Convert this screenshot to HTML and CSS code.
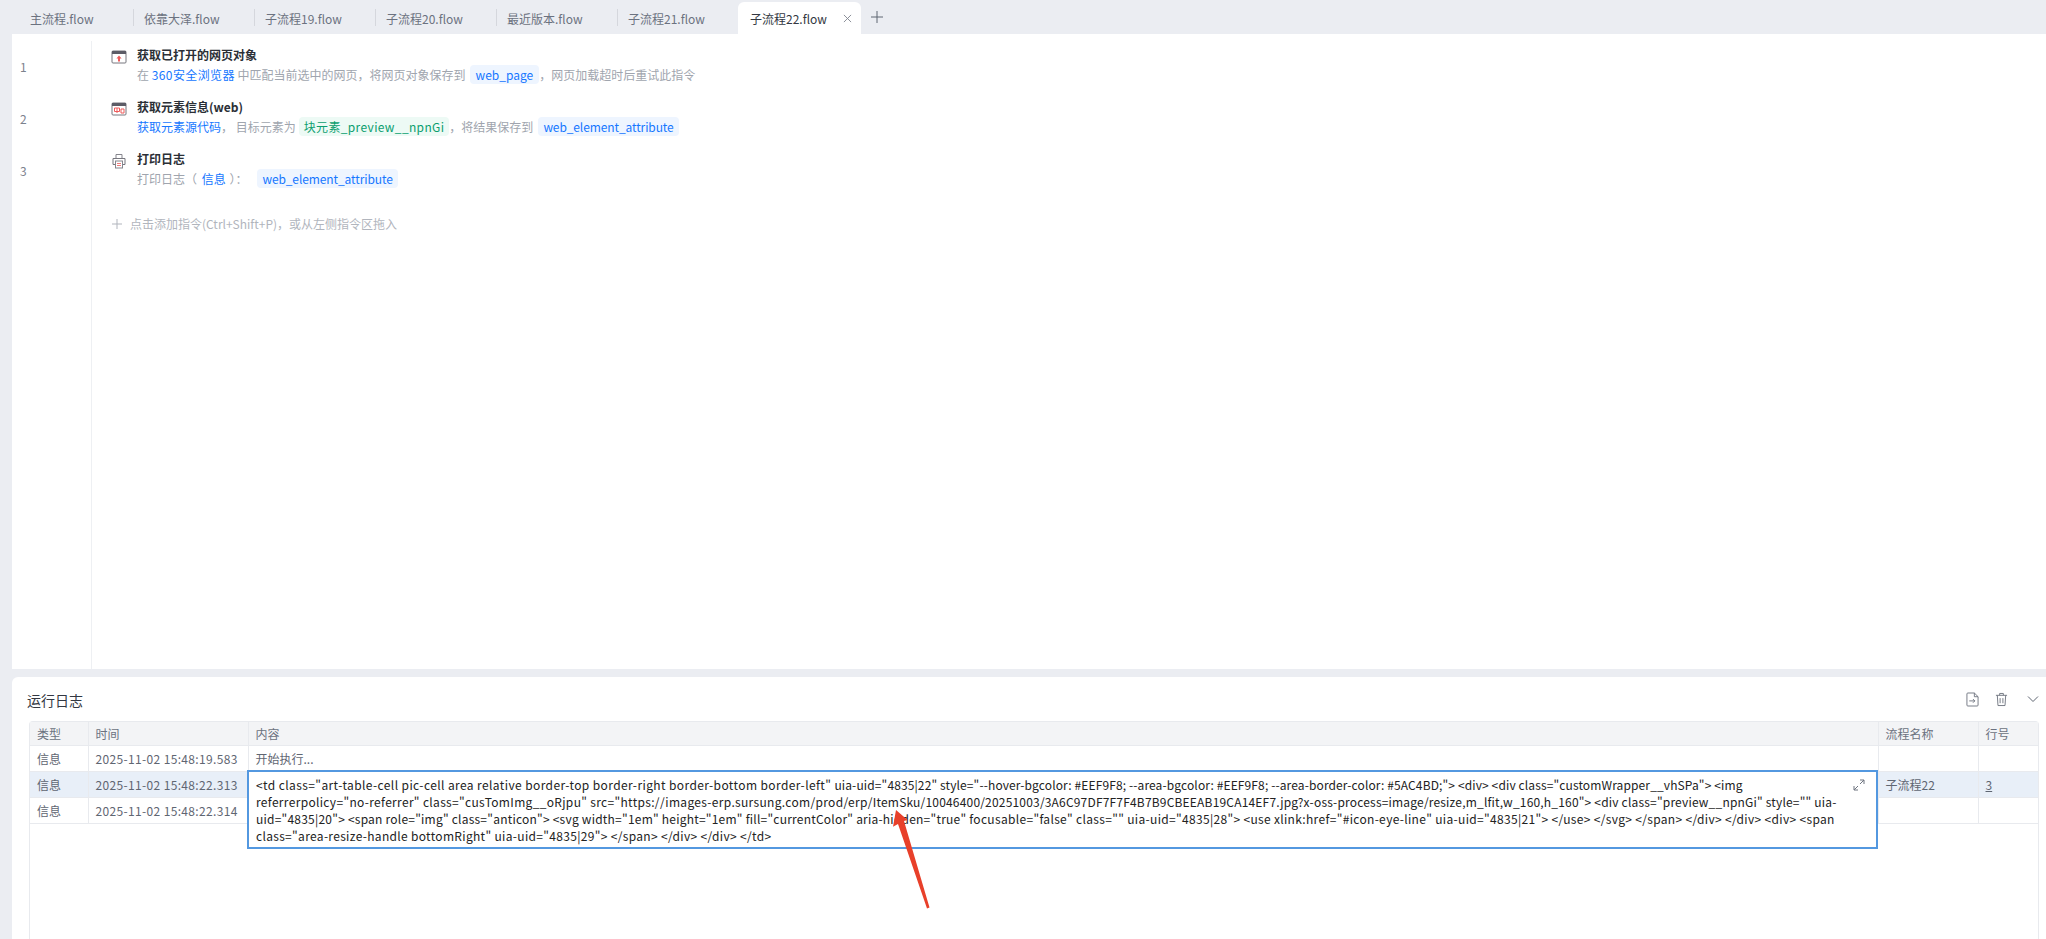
FILE: index.html
```html
<!DOCTYPE html>
<html lang="zh-CN">

<head>
    <meta charset="UTF-8">
    <title>子流程22.flow</title>
    <link rel="stylesheet" href="styles.css">
</head>

<body>
    <nav class="tabs">
        <span class="tab first">主流程.flow</span>
        <span class="tab">依靠大泽.flow</span>
        <span class="tab">子流程19.flow</span>
        <span class="tab">子流程20.flow</span>
        <span class="tab">最近版本.flow</span>
        <span class="tab">子流程21.flow</span>
        <span class="tab active">子流程22.flow
            <svg class="close" viewBox="0 0 10 10"><path d="M1 1l8 8M9 1l-8 8" /></svg>
        </span>
        <svg class="add" viewBox="0 0 12 12"><path d="M6 0v12M0 6h12" /></svg>
    </nav>

    <main class="editor">
        <div class="gutter">
            <span>1</span>
            <span>2</span>
            <span>3</span>
        </div>
        <div class="flow">
            <div class="cmd">
                <svg class="ico" viewBox="0 0 16 16">
                    <rect x="1" y="2" width="14" height="12" rx="1" fill="#fff" stroke="#77777f" />
                    <rect x="1" y="2" width="14" height="3" fill="#5c5c66" />
                    <path d="M8 6.500l2.600 3H9v3H7v-3H5.400z" fill="#ee5a5a" />
                </svg>
                <div>
                    <div class="title">获取已打开的网页对象</div>
                    <div class="desc">在 <a class="wide-text">360安全浏览器</a> 中匹配当前选中的网页，将网页对象保存到<b class="chip page">web_page</b>，网页加载超时后重试此指令</div>
                </div>
            </div>
            <div class="cmd">
                <svg class="ico" viewBox="0 0 16 16">
                    <rect x="1" y="2" width="14" height="12" rx="1" fill="#fff" stroke="#77777f" />
                    <rect x="1" y="2" width="14" height="3" fill="#5c5c66" />
                    <path d="M3.500 7h5v3.500h-5zM6 7v5M10 8h3v4h-3z" fill="none" stroke="#ee5a5a" />
                </svg>
                <div>
                    <div class="title">获取元素信息(web)</div>
                    <div class="desc"><a>获取元素源代码</a>，&nbsp;目标元素为<b class="chip green">块元素_preview__npnGi</b>，将结果保存到<b class="chip attr">web_element_attribute</b></div>
                </div>
            </div>
            <div class="cmd">
                <svg class="ico" viewBox="0 0 16 16">
                    <path d="M5 5V1.500h6V5" fill="none" stroke="#85858d" />
                    <path d="M4 11.500H2V5.500h12v6h-2" fill="none" stroke="#77777f" />
                    <rect x="4.500" y="8" width="7" height="7" fill="#fff" stroke="#85858d" />
                    <path d="M6 10.500h4M6 12.500h4" stroke="#ee7a7a" />
                </svg>
                <div>
                    <div class="title">打印日志</div>
                    <div class="desc">打印日志（ <a class="level">信息</a> ）：<b class="chip attr spaced">web_element_attribute</b></div>
                </div>
            </div>
            <div class="add-cmd">
                <svg viewBox="0 0 12 12"><path d="M6 1v10M1 6h10" /></svg>
                点击添加指令(Ctrl+Shift+P)，或从左侧指令区拖入
            </div>
        </div>
    </main>

    <section class="log">
        <header class="log-head">
            <h3>运行日志</h3>
            <div class="tools">
                <svg viewBox="0 0 14 16"><path d="M9 1H2a1 1 0 0 0-1 1v12a1 1 0 0 0 1 1h10a1 1 0 0 0 1-1V5zM9 1v4h4M3.500 9.500h6M7.500 7.500l2 2-2 2" /></svg>
                <svg viewBox="0 0 14 16"><path d="M1 3.500h12M5 3.500V1.500h4v2M2.500 3.500l.7 11h7.600l.7-11M5.500 6.500v5.500M8.500 6.500v5.500" /></svg>
                <svg viewBox="0 0 12 8"><path d="M1 1.500l5 5 5-5" /></svg>
            </div>
        </header>

        <div class="table-wrap">
            <table>
                <colgroup>
                    <col class="c-type">
                    <col class="c-time">
                    <col>
                    <col class="c-flow">
                    <col class="c-line">
                </colgroup>
                <thead>
                    <tr>
                        <th>类型</th>
                        <th>时间</th>
                        <th>内容</th>
                        <th>流程名称</th>
                        <th>行号</th>
                    </tr>
                </thead>
                <tbody>
                    <tr>
                        <td>信息</td>
                        <td class="time">2025-11-02 15:48:19.583</td>
                        <td>开始执行...</td>
                        <td></td>
                        <td></td>
                    </tr>
                    <tr class="sel">
                        <td>信息</td>
                        <td class="time">2025-11-02 15:48:22.313</td>
                        <td></td>
                        <td>子流程22</td>
                        <td><u>3</u></td>
                    </tr>
                    <tr>
                        <td>信息</td>
                        <td class="time">2025-11-02 15:48:22.314</td>
                        <td></td>
                        <td></td>
                        <td></td>
                    </tr>
                </tbody>
            </table>

            <div class="detail">
                <p><span class="sp-d">&lt;td class="art-table-cell pic-cell area relative border-top border-right border-bottom border-left" </span><span class="sp-a">uia-uid="4835|22" style="--hover-bgcolor: #EEF9F8; --area-bgcolor: #EEF9F8; --area-border-color: #5AC4BD;"&gt; &lt;div&gt; &lt;div class="customWrapper__vhSPa"&gt; &lt;img</span></p>
                <p><span class="sp-b">referrerpolicy="no-referrer" class="cusTomImg__oRjpu" src="https://images-erp.sursung.com/prod/erp/</span><span class="sp-f">ItemSku/10046400/20251003/3A6C97DF7F7F4B7B9CBEEAB19CA14EF7.jpg?x-oss-process=image/resize,m_lfit,w_160,h_160"&gt; &lt;div class="preview__npnGi" style="" uia-</span></p>
                <p><span class="sp-g">uid="4835|20"&gt; &lt;span role="img" class="anticon"&gt; &lt;svg width="1em" height="1em" fill="currentColor" aria-hidden="true" </span><span class="sp-b">focusable="false" class="" uia-uid="4835|28"&gt; &lt;use xlink:href="#icon-eye-line" uia-uid="4835|21"&gt; &lt;/use&gt; &lt;/svg&gt; &lt;/span&gt; &lt;/div&gt; &lt;/div&gt; &lt;div&gt; &lt;span</span></p>
                <p><span class="sp-b">class="area-resize-handle bottomRight" uia-uid="4835|29"&gt; &lt;/span&gt; &lt;/div&gt; &lt;/div&gt; &lt;/td&gt;</span></p>
                <svg class="expand" viewBox="0 0 12 12"><path d="M7 1h4v4M11 1L7 5M5 11H1V7M1 11l4-4" /></svg>
            </div>
        </div>

        <svg class="arrow" viewBox="0 0 50 110"><path d="M9 2L20.600 12 17 13l25.500 86.500-2.500 1L11 16l-5 2.700z" /></svg>
    </section>
</body>

</html>
```

FILE: styles.css
```css
* {
    box-sizing: border-box;
}

html,
body {
    height: 100%;
}

body {
    margin: 0;
    display: flex;
    flex-direction: column;
    overflow: hidden;
    background: #ebedf2;
    color: #5f6672;
    font-family: "Noto Sans CJK SC", "Liberation Sans", sans-serif;
    font-size: 12px;
}

/* tabs */
.tabs {
    height: 34px;
    flex: none;
    display: flex;
    align-items: stretch;
    padding-top: 2px;
    padding-left: 12px;
}

.tab {
    width: 121px;
    padding-left: 11px;
    display: flex;
    align-items: center;
    position: relative;
    color: #6b7280;
}

.tab + .tab::before {
    content: "";
    position: absolute;
    left: 0;
    top: 7px;
    height: 17px;
    border-left: 1px solid #d5d7dd;
}

.tab.first {
    padding-left: 18px;
}

.tab.active {
    width: 123px;
    padding-left: 12px;
    background: #fff;
    color: #333842;
    border-radius: 6px 6px 0 0;
    justify-content: space-between;
    padding-right: 9px;
}

.tab.active::before {
    display: none;
}

.close {
    width: 9px;
    height: 9px;
    fill: none;
    stroke: #80858f;
}

.add {
    width: 12px;
    height: 12px;
    margin: 9px 0 0 10px;
    fill: none;
    stroke: #5f6672;
}

/* editor */
.editor {
    flex: 1;
    display: flex;
    margin-left: 12px;
    background: #fff;
    min-height: 0;
}

.gutter {
    width: 80px;
    flex: none;
    margin-top: 7px;
    border-right: 1px solid #eef0f3;
    display: flex;
    flex-direction: column;
    padding: 17px 0 0 8px;
    gap: 34px;
    color: #7c828d;
}

.gutter span {
    line-height: 18px;
}

.flow {
    padding: 11px 0 0 19px;
}

.cmd {
    display: flex;
    gap: 10px;
    height: 52px;
}

.ico {
    width: 16px;
    height: 16px;
    margin-top: 4px;
    flex: none;
}

.title {
    font-weight: 700;
    color: #2b2f36;
    line-height: 20px;
}

.desc {
    color: #a0a5ae;
    line-height: 20px;
    white-space: nowrap;
}

.desc a {
    color: #1677ff;
}

.desc .wide-text {
    letter-spacing: .4px;
}

.desc .level {
    margin: 0 1px 0 2px;
}

.chip {
    display: inline-block;
    font-weight: 400;
    line-height: 19px;
    padding: 0 5px;
    margin: 0 2px 0 5px;
    border-radius: 4px;
    background: #eef5ff;
    color: #1677ff;
}

.chip.page {
    padding: 0 6px;
    margin: 0 0 0 4px;
}

.chip.attr {
    letter-spacing: -.1px;
}

.chip.green {
    margin: 0 0 0 3px;
    letter-spacing: .35px;
    background: #edfaf5;
    color: #0b9e6f;
}

.chip.spaced {
    margin-left: 10px;
}

.add-cmd {
    display: flex;
    align-items: center;
    gap: 7px;
    margin-top: 14px;
    color: #b1b5bd;
}

.add-cmd svg {
    width: 12px;
    height: 12px;
    fill: none;
    stroke: #b1b5bd;
}

/* run log */
.log {
    height: 262px;
    flex: none;
    margin: 8px 0 0 12px;
    padding: 0 7px 0 17px;
    background: #fff;
    border-radius: 6px 0 0 0;
    position: relative;
}

.log-head {
    height: 44px;
    display: flex;
    align-items: center;
    justify-content: space-between;
    padding-top: 2px;
}

.log-head h3 {
    margin: 0 0 0 -2px;
    font-size: 14px;
    font-weight: 400;
    color: #333842;
}

.tools {
    display: flex;
    align-items: center;
    gap: 16px;
    margin-top: -2px;
}

.tools svg {
    width: 13px;
    height: 15px;
    fill: none;
    stroke: #6f7580;
}

.tools svg:last-child {
    width: 12px;
    height: 8px;
    margin-left: 3px;
    stroke: #5f6672;
}

.table-wrap {
    position: relative;
    height: 218px;
    border: 1px solid #e8eaee;
    border-bottom: 0;
    border-radius: 4px 4px 0 0;
}

table {
    width: 100%;
    table-layout: fixed;
    border-collapse: collapse;
}

.c-type {
    width: 58px;
}

.c-time {
    width: 160px;
}

.c-flow {
    width: 100px;
}

.c-line {
    width: 60px;
}

th,
td {
    padding: 0 0 0 7px;
    text-align: left;
    font-weight: 400;
    border-right: 1px solid #e8eaee;
    border-bottom: 1px solid #e8eaee;
    height: 26px;
    white-space: nowrap;
}

th {
    height: 23px;
    background: #f3f4f6;
    color: #6b7280;
}

th:last-child,
td:last-child {
    border-right: 0;
}

td.time {
    letter-spacing: .35px;
}

tr.sel td {
    background: #e8eff8;
}

/* expanded cell sits over the table */
.detail {
    position: absolute;
    left: 217px;
    top: 48px;
    width: 1631px;
    height: 79px;
    padding: 4px 0 0 7px;
    background: #fff;
    border: 2px solid #5398e0;
    color: #222;
    line-height: 17px;
}

.detail p {
    margin: 0;
    white-space: nowrap;
}

/* latin text runs a bit wider in the original font, differs per stretch */
.sp-a {
    letter-spacing: .12px;
}

.sp-b {
    letter-spacing: .32px;
}

.sp-d {
    letter-spacing: .4px;
}

.sp-f {
    letter-spacing: .185px;
}

.sp-g {
    letter-spacing: .22px;
}

.expand {
    position: absolute;
    right: 11px;
    top: 7px;
    width: 12px;
    height: 12px;
    fill: none;
    stroke: #6f7580;
}

.arrow {
    position: absolute;
    left: 875px;
    top: 131px;
    width: 50px;
    height: 110px;
    fill: #e8402a;
}
```
